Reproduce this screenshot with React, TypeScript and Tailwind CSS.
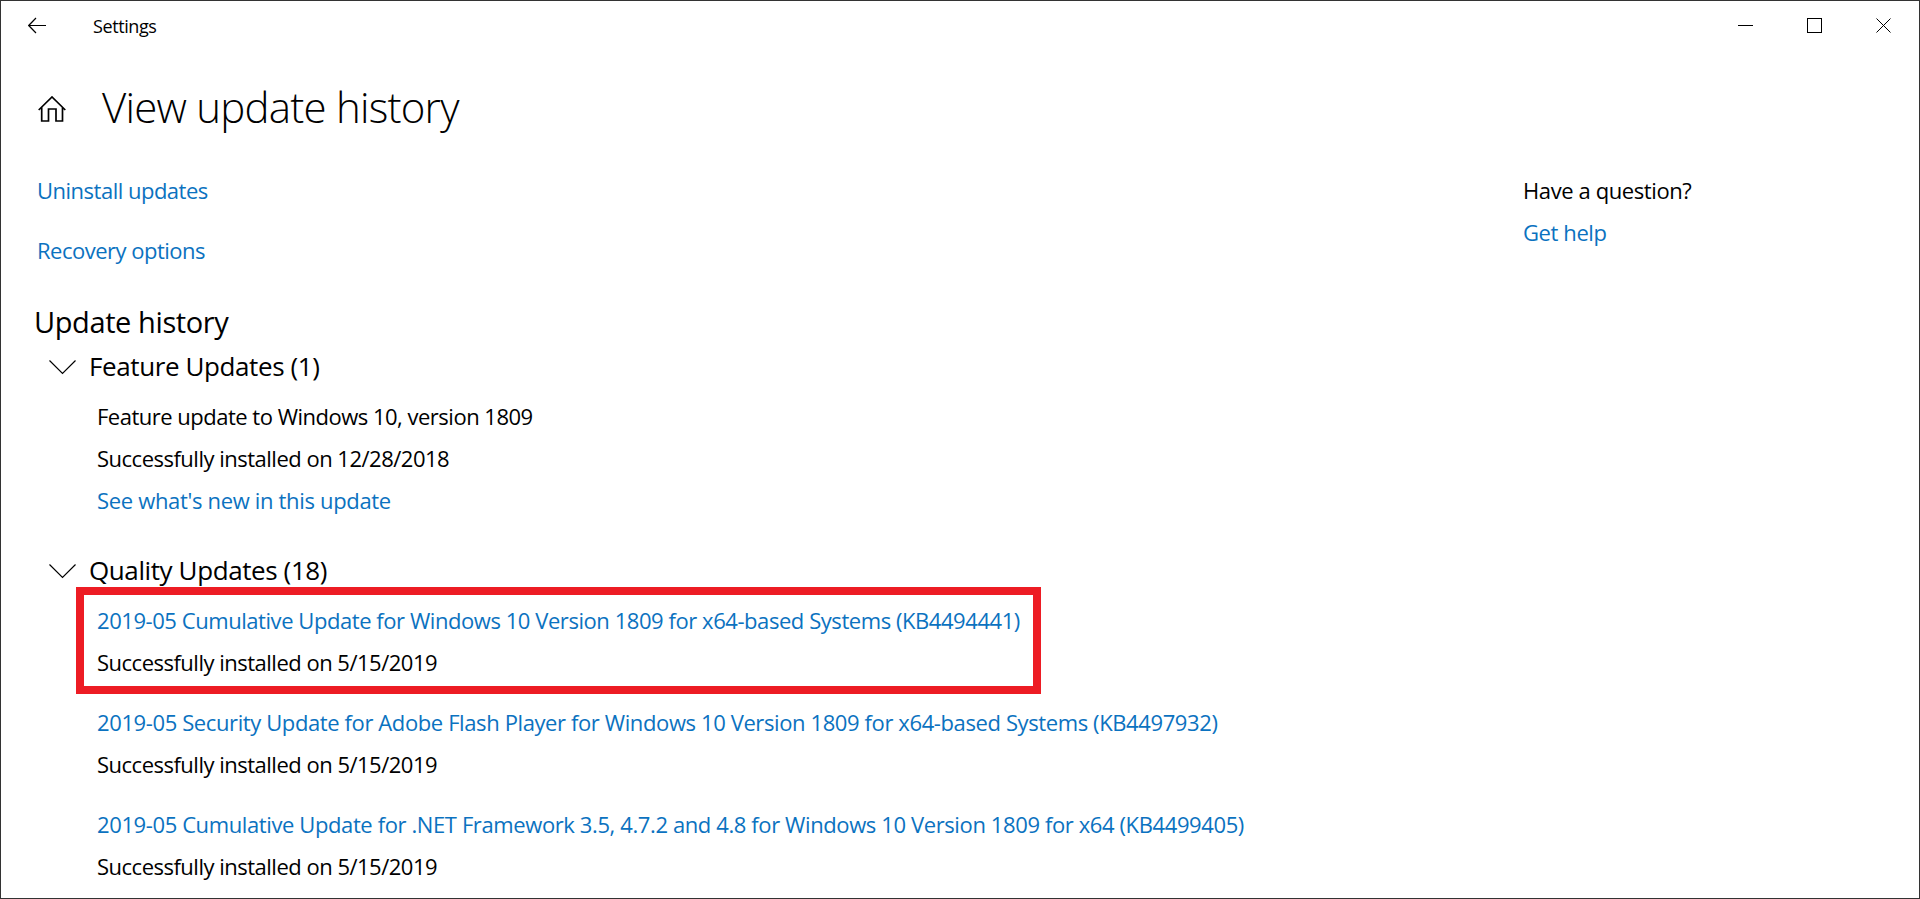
const LINK = "text-[#0b72c0]";

const UPDATES = [
  {
    title: "2019-05 Security Update for Adobe Flash Player for Windows 10 Version 1809 for x64-based Systems (KB4497932)",
    date: "5/15/2019",
  },
  {
    title: "2019-05 Cumulative Update for .NET Framework 3.5, 4.7.2 and 4.8 for Windows 10 Version 1809 for x64 (KB4499405)",
    date: "5/15/2019",
  },
];

function SectionHeader({ label }: { label: string }) {
  return (
    <div className="flex h-[36px] items-center">
      <svg className="ml-[48px] mt-[3px] shrink-0" width="27" height="15" viewBox="0 0 27 15" fill="none" stroke="currentColor" strokeWidth="1.2">
        <path d="M0.5 0.5L13.5 13.5L26.5 0.5" />
      </svg>
      <span className="ml-[13px] text-[26px] leading-[36px] tracking-[-0.4px]">{label}</span>
    </div>
  );
}

export default function App() {
  return (
    <div className="h-[899px] w-[1920px] overflow-hidden border border-[#333333] bg-white font-['Open_Sans',sans-serif] text-[22px] text-black">
      <div className="flex h-[49px] items-center justify-between">
        <div className="flex items-center">
          <svg className="ml-[27px]" width="18" height="17" viewBox="0 0 18 17" fill="none" stroke="currentColor" strokeWidth="1.2">
            <path d="M18 8.5H0.7M8 1L0.7 8.5L8 16" />
          </svg>
          <span className="ml-[47px] mt-[1px] text-[18px] tracking-[-0.4px]">Settings</span>
        </div>
        <div className="mr-[28px] flex items-center gap-[54px]">
          <svg width="15" height="15" viewBox="0 0 15 15" fill="none" stroke="currentColor" strokeWidth="1">
            <path d="M0 7.5H15" />
          </svg>
          <svg width="15" height="15" viewBox="0 0 15 15" fill="none" stroke="currentColor" strokeWidth="1">
            <rect x="0.5" y="0.5" width="14" height="14" />
          </svg>
          <svg width="15" height="15" viewBox="0 0 15 15" fill="none" stroke="currentColor" strokeWidth="1">
            <path d="M0.5 0.5L14.5 14.5M14.5 0.5L0.5 14.5" />
          </svg>
        </div>
      </div>

      <div className="mt-[26px] flex h-[60px] items-center">
        <svg className="ml-[37px] mt-[6px]" width="28" height="26" viewBox="0 0 28 26" fill="none" stroke="currentColor" strokeWidth="1.7">
          <path d="M0.7 14L14 1L27.3 14M3.7 11.5V25H10.5V13H18V25H24.5V11.5" />
        </svg>
        <h1 className="ml-[36px] text-[42px] font-light tracking-[-0.77px]">View update history</h1>
      </div>

      <div className="flex">
        <div className="w-[1522px] shrink-0">
          <div className={`mt-[39px] pl-[36px] leading-[30px] tracking-[-0.5px] ${LINK}`}>Uninstall updates</div>
          <div className={`mt-[30px] pl-[36px] leading-[30px] tracking-[-0.5px] ${LINK}`}>Recovery options</div>
          <div className="mt-[37px] pl-[33px] text-[29px] leading-[40px] tracking-[-0.4px]">Update history</div>
          <div className="mt-[6px]">
            <SectionHeader label="Feature Updates (1)" />
          </div>
          <div className="mt-[11px] pl-[96px] leading-[42px] tracking-[-0.5px]">
            <div>Feature update to Windows 10, version 1809</div>
            <div>Successfully installed on 12/28/2018</div>
            <div className={`tracking-[-0.33px] ${LINK}`}>See what's new in this update</div>
          </div>
          <div className="mt-[31px]">
            <SectionHeader label="Quality Updates (18)" />
          </div>
          <div className="ml-[75px] mt-[-1px] w-[965px] border-[8px] border-[#ed1c24] pb-[3px] pl-[13px] pt-[4px] leading-[42px] tracking-[-0.5px]">
            <div className={`tracking-[-0.44px] ${LINK}`}>2019-05 Cumulative Update for Windows 10 Version 1809 for x64-based Systems (KB4494441)</div>
            <div>Successfully installed on 5/15/2019</div>
          </div>
          <div className="pl-[96px] leading-[42px] tracking-[-0.5px]">
            {UPDATES.map((update) => (
              <div key={update.title} className="mt-[18px] first:mt-[7px]">
                <div className={`tracking-[-0.39px] ${LINK}`}>{update.title}</div>
                <div>Successfully installed on {update.date}</div>
              </div>
            ))}
          </div>
        </div>
        <div className="pt-[39px] leading-[30px] tracking-[-0.4px]">
          <div>Have a question?</div>
          <div className={`mt-[12px] ${LINK}`}>Get help</div>
        </div>
      </div>
    </div>
  );
}
